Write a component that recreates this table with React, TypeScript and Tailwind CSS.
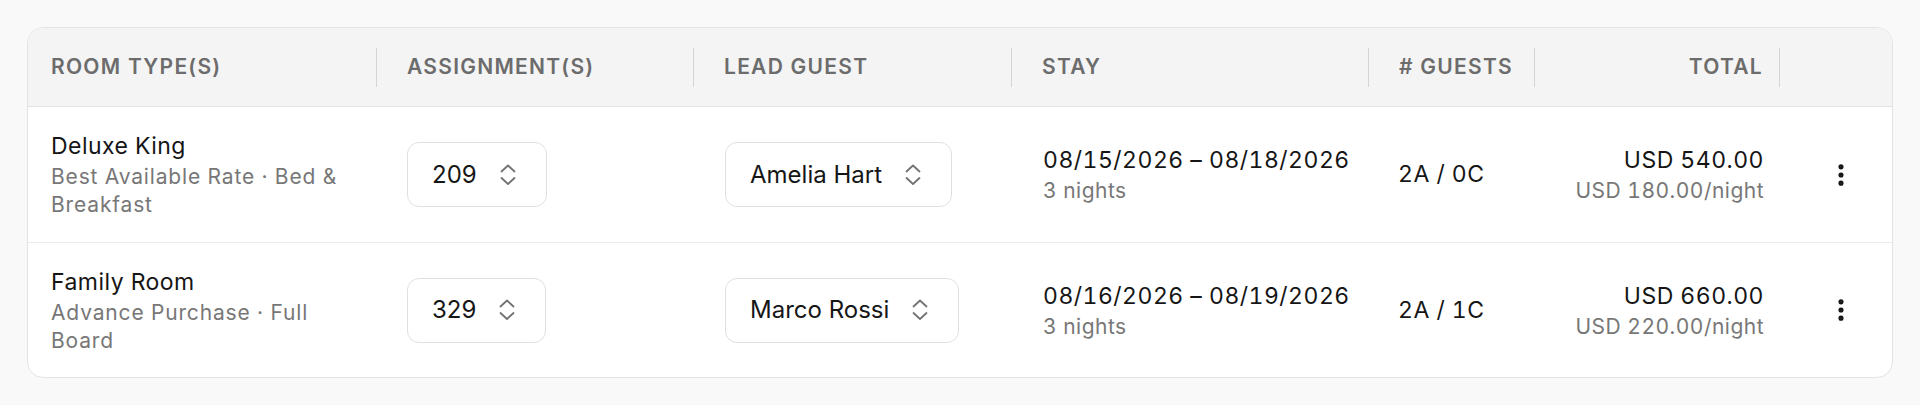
import { EllipsisVertical } from 'lucide-react'

type Row = {
    room: string
    rate: string
    assignment: string
    guest: string
    stay: string
    nights: string
    guests: string
    total: string
    perNight: string
}

const rows: Row[] = [
    {
        room: 'Deluxe King',
        rate: 'Best Available Rate · Bed & Breakfast',
        assignment: '209',
        guest: 'Amelia Hart',
        stay: '08/15/2026 – 08/18/2026',
        nights: '3 nights',
        guests: '2A / 0C',
        total: 'USD 540.00',
        perNight: 'USD 180.00/night',
    },
    {
        room: 'Family Room',
        rate: 'Advance Purchase · Full Board',
        assignment: '329',
        guest: 'Marco Rossi',
        stay: '08/16/2026 – 08/19/2026',
        nights: '3 nights',
        guests: '2A / 1C',
        total: 'USD 660.00',
        perNight: 'USD 220.00/night',
    },
]

const cols = 'grid grid-cols-[349px_317px_318px_357px_166px_245px_1fr]'

function UpDown() {
    return (
        <svg width="18" height="22" viewBox="0 0 18 22" fill="none" stroke="#727272" strokeWidth="1.8" strokeLinecap="round" strokeLinejoin="round">
            <polyline points="2.5,7.5 9,1.5 15.5,7.5" />
            <polyline points="2.5,14 9,20 15.5,14" />
        </svg>
    )
}

function Select({ value }: { value: string }) {
    return (
        <button type="button" className="inline-flex h-[65px] items-center gap-[22px] rounded-xl border border-[#e0e0e0] bg-white pl-6 pr-[29px] text-[24px] normal-nums tracking-normal text-[#161616]">
            <span>{value}</span>
            <UpDown />
        </button>
    )
}

function HeadCell({ label, first, right }: { label: string; first?: boolean; right?: boolean }) {
    return (
        <div className={`flex items-center ${first ? 'pl-[23px]' : 'pl-[30px]'}`}>
            <span className={`flex-1 ${right ? 'pr-4 text-right' : ''}`}>{label}</span>
            <span className="h-[39px] w-px bg-[#d4d4d4]" />
        </div>
    )
}

export default function App() {
    return (
        <div className="min-h-[405px] bg-[#f9f9f9] px-[27px] pt-[27px]" style={{ fontFamily: 'Inter, "Noto Sans", sans-serif' }}>
            <div className="overflow-hidden rounded-2xl border border-[#e4e4e4] bg-white">
                <div className={`${cols} h-[79px] border-b border-[#e4e4e4] bg-[#f4f4f4] text-[21px] font-semibold uppercase tracking-[0.06em] text-[#6c6c6c]`}>
                    <HeadCell label="Room Type(s)" first />
                    <HeadCell label="Assignment(s)" />
                    <HeadCell label="Lead Guest" />
                    <HeadCell label="Stay" />
                    <HeadCell label="# Guests" />
                    <HeadCell label="Total" right />
                    <div />
                </div>

                {rows.map((r, i) => (
                    <div key={r.room} className={`${cols} tracking-[0.03em] tabular-nums ${i === 0 ? 'h-[136px] border-b border-[#ebebeb]' : 'h-[134px]'}`}>
                        <div className="flex flex-col justify-center pl-[23px]">
                            <p className="text-[23px] leading-[33px] tracking-[0.02em] text-[#151515]">{r.room}</p>
                            <p className="max-w-[305px] text-[21px] leading-[28px] tracking-[0.04em] text-[#777777]">{r.rate}</p>
                        </div>
                        <div className="flex items-center pl-[30px]">
                            <Select value={r.assignment} />
                        </div>
                        <div className="flex items-center pl-[31px]">
                            <Select value={r.guest} />
                        </div>
                        <div className="flex flex-col justify-center pl-[31px]">
                            <p className="text-[23px] leading-[33px] text-[#151515]">{r.stay}</p>
                            <p className="text-[21px] leading-[28px] text-[#777777]">{r.nights}</p>
                        </div>
                        <div className="flex items-center pl-[29px] text-[23px] text-[#151515]">
                            {r.guests}
                        </div>
                        <div className="flex flex-col items-end justify-center pr-4">
                            <p className="text-[23px] leading-[33px] text-[#151515]">{r.total}</p>
                            <p className="text-[21px] leading-[28px] text-[#777777]">{r.perNight}</p>
                        </div>
                        <div className="flex items-center pl-[47px]">
                            <EllipsisVertical size={28} strokeWidth={2.4} className="text-[#151515]" />
                        </div>
                    </div>
                ))}
            </div>
        </div>
    )
}
